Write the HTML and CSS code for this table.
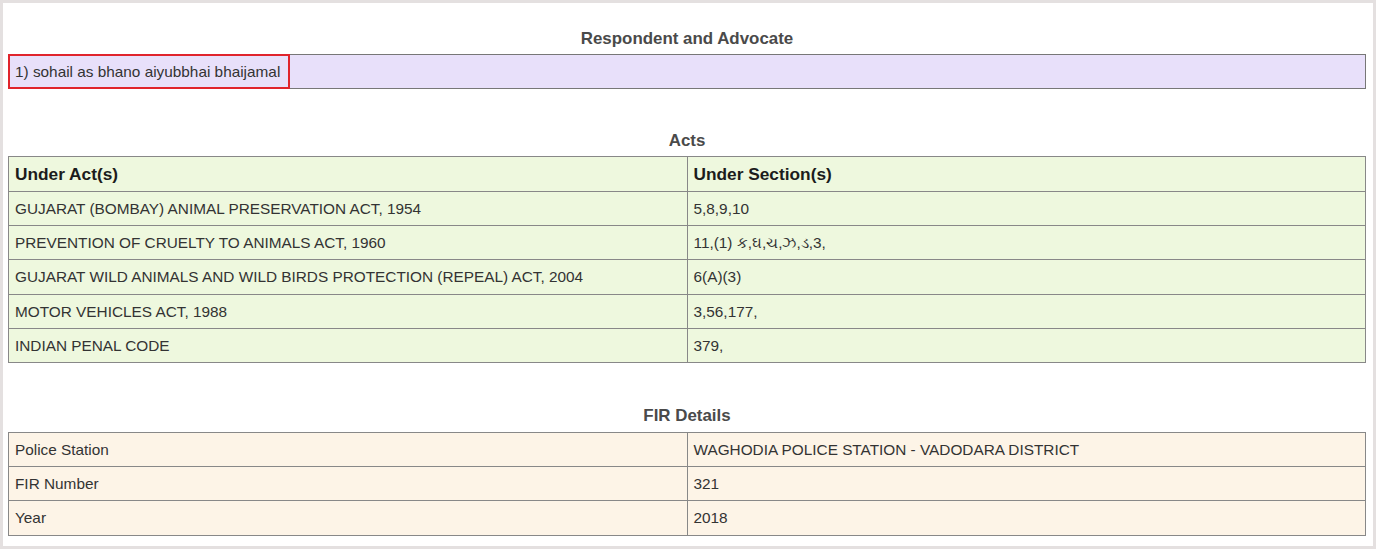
FILE: index.html
```html
<!DOCTYPE html>
<html>
<head>
<meta charset="utf-8">
<link rel="stylesheet" href="styles.css">
</head>
<body>
<div class="frame">
  <h2 class="title title-first">Respondent and Advocate</h2>
  <table class="tbl tbl-resp">
    <tr><td><span class="hl">1) sohail as bhano aiyubbhai bhaijamal</span></td></tr>
  </table>

  <h2 class="title">Acts</h2>
  <table class="tbl tbl-acts">
    <tr><th>Under Act(s)</th><th>Under Section(s)</th></tr>
    <tr><td>GUJARAT (BOMBAY) ANIMAL PRESERVATION ACT, 1954</td><td>5,8,9,10</td></tr>
    <tr><td>PREVENTION OF CRUELTY TO ANIMALS ACT, 1960</td><td>11,(1) ક,ઘ,ચ,ઝ,ડ,3,</td></tr>
    <tr><td>GUJARAT WILD ANIMALS AND WILD BIRDS PROTECTION (REPEAL) ACT, 2004</td><td>6(A)(3)</td></tr>
    <tr><td>MOTOR VEHICLES ACT, 1988</td><td>3,56,177,</td></tr>
    <tr><td>INDIAN PENAL CODE</td><td>379,</td></tr>
  </table>

  <h2 class="title title-fir">FIR Details</h2>
  <table class="tbl tbl-fir">
    <tr><td>Police Station</td><td>WAGHODIA POLICE STATION - VADODARA DISTRICT</td></tr>
    <tr><td>FIR Number</td><td>321</td></tr>
    <tr><td>Year</td><td>2018</td></tr>
  </table>
</div>
</body>
</html>
```
FILE: styles.css
```css
html, body {
  margin: 0;
  padding: 0;
  background: #ffffff;
}
body {
  font-family: "Liberation Sans", Arial, sans-serif;
  font-size: 15.35px;
  color: #333333;
}
.frame {
  box-sizing: border-box;
  width: 1376px;
  height: 549px;
  border: 3px solid #e4e0e0;
  padding: 0 7px 0 5px;
  overflow: hidden;
}
.title {
  margin: 0;
  text-align: center;
  font-size: 16.9px;
  font-weight: bold;
  color: #4a4a4a;
  height: 18px;
  line-height: 18px;
  padding-top: 43px;
  padding-bottom: 6px;
}
.title-first {
  padding-top: 27px;
}
.title-fir {
  padding-top: 44px;
  padding-bottom: 7px;
}
.tbl {
  width: 100%;
  border-collapse: collapse;
  border: 1px solid #666666;
}
.tbl td, .tbl th {
  border: 1px solid #888888;
  padding: 8px 6px;
  line-height: 17.2px;
  text-align: left;
  vertical-align: middle;
}
.tbl td:first-child, .tbl th:first-child {
  width: 50%;
}
.tbl-resp td {
  background: #e8e0fa;
  padding: 0;
  border-color: #777777;
}
.hl {
  display: inline-block;
  box-sizing: border-box;
  height: 35px;
  line-height: 31px;
  padding: 0 8px 0 5px;
  border: 2px solid #e0242c;
  margin: -1px 0 -1px -1px;
  vertical-align: top;
}
.tbl-acts td, .tbl-acts th {
  background: #eef8de;
}
.tbl-acts th {
  font-weight: bold;
  color: #1c1c1c;
  font-size: 17.3px;
  line-height: 18px;
}
.tbl-fir td {
  background: #fdf4e7;
}
```
